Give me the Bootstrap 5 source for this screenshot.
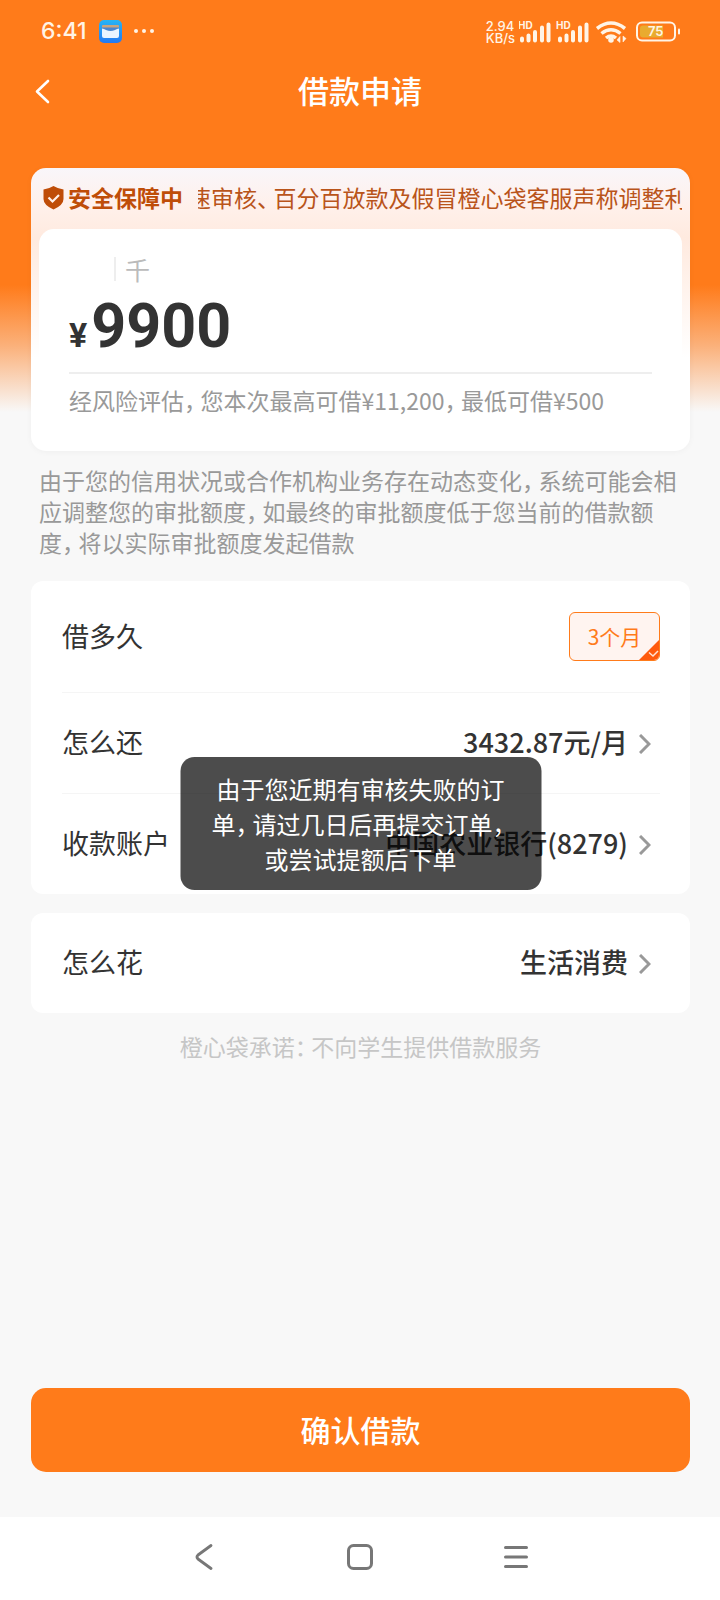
<!DOCTYPE html>
<html lang="zh-CN">
<head>
<meta charset="utf-8">
<meta name="viewport" content="width=device-width, initial-scale=1">
<title>借款申请</title>
<link rel="stylesheet" href="https://cdn.jsdelivr.net/npm/bootstrap@5.3.0/dist/css/bootstrap.min.css">
<style>
  :root { --brand: #ff7b1a; --page: #f8f8f8; --ink: #333; --muted: #999; }
  body { font-family: "Noto Sans CJK SC", sans-serif; color: var(--ink); font-size: 23px; line-height: 31px;
    background: linear-gradient(var(--brand) 0, var(--brand) 285px, #fbb079 345px, var(--page) 412px) no-repeat var(--page); }
  svg { display: block; flex: none; }
  button { color: inherit; }
  .status-bar { height: 62px; padding: 1px 39px 0 41px; color: #fff4e6; font-family: Inter, sans-serif; }
  .clock { font-size: 23px; font-weight: 500; }
  .net-speed { font-size: 13px; line-height: 12px; font-weight: 500; }
  .title-bar { height: 60px; margin-bottom: 46px; }
  .title-bar h1 { font-size: 31px; font-weight: 500; line-height: 40px; padding-bottom: 4px; }
  .back-btn { left: 31px; padding: 0; border: 0; }
  .page-col { padding: 0 30px 0 31px; }
  .amount-card { border-radius: 15px; padding: 0 8px;
    background: linear-gradient(#f9f6fa 0, #fff0ea 40px, #ffeadf 70px, #fff 190px);
    box-shadow: 0 1px 6px rgba(0, 0, 0, .04); }
  .safety { height: 61px; color: #b9541a; padding: 0 0 2px 4px; gap: 15px; }
  .safety strong { color: #bf4d08; gap: 4px; font-weight: 700; }
  .ticker { text-indent: -10px; }
  .pause { font-feature-settings: "halt"; margin-right: 5px; }
  .amount-inner { border-radius: 15px; background: #fff; padding: 24px 30px 35px; }
  .unit { color: #bbb; font-size: 25px; line-height: 32px; gap: 9px; padding-left: 45px; }
  .unit::before { content: ""; width: 2px; height: 24px; background: #eee; }
  .amount { font-family: Roboto, sans-serif; font-weight: 700; font-size: 61px; line-height: 72px; height: 77px; padding-top: 5px; }
  .amount small { font-size: 34px; margin-right: 4px; }
  .limit { color: var(--muted); border-top: 2px solid #eee; margin-top: 10px; padding-top: 11px; }
  .notice { color: var(--muted); padding: 14px 8px 23px; }
  .panel { background: #fff; border-radius: 12px; padding: 0 30px 0 31px; }
  .panel-row { min-height: 100px; font-size: 27px; width: 100%; background: none; border: 0; padding: 0; }
  .panel-row > span { padding-bottom: 3px; }
  .panel-row + .panel-row { border-top: 1px solid #f5f5f5; min-height: 101px; }
  .term-row { min-height: 111px; }
  .row-value { font-weight: 500; gap: 11px; padding-right: 9px; }
  .row-value svg { margin-top: 4px; }
  .term { width: 91px; height: 49px; border: 1px solid var(--brand); border-radius: 6px; background: #fff4f0;
    color: var(--brand); font-size: 21px; line-height: 47px; text-align: center; overflow: hidden; }
  .term svg { right: -1px; bottom: -1px; }
  .tip { width: 361px; padding: 14px 20px; border-radius: 14px; background: rgba(0, 0, 0, .7); color: #fff;
    font-size: 24px; line-height: 35px; bottom: 4px; z-index: 5; }
  .spend-panel { margin-top: 19px; }
  .promise { color: #c6c6c6; padding-top: 18px; }
  .confirm-btn { height: 84px; border-radius: 15px; background: var(--brand); color: #fff; font-size: 30px; font-weight: 500; margin-bottom: 45px; padding: 0 0 2px; }
  .confirm-btn:hover { background: #f06d0d; color: #fff; }
  .sys-nav { background: #fff; height: 83px; padding-bottom: 4px; }
  .sys-nav div { width: 65%; }
  .sys-nav button { border: 0; background: none; padding: 8px; }
</style>
</head>
<body class="d-flex flex-column min-vh-100">
<header>
  <div class="status-bar d-flex justify-content-between align-items-center">
    <div class="d-flex align-items-center">
      <span class="clock">6:41</span>
      <svg class="ms-2" width="60" height="24" viewBox="0 0 60 24" aria-hidden="true">
        <defs><linearGradient id="app" x1="0" y1="0" x2="0" y2="1"><stop offset="0" stop-color="#27b4f5"/><stop offset="1" stop-color="#2479f2"/></linearGradient></defs>
        <rect x="4" y="0" width="23" height="23" rx="5" fill="url(#app)"/>
        <rect x="7" y="5" width="17" height="5" rx="1" fill="#c9a57e"/>
        <path d="M7 8h17v8a2 2 0 0 1-2 2H9a2 2 0 0 1-2-2z" fill="#eaf4ff"/>
        <path d="M7 7.500h17v1q-2 0-4 1.500-4.500 2-9 0-2-1.500-4-1.500z" fill="#4a86d0"/>
        <g fill="#fff4e6"><circle cx="41" cy="11" r="2"/><circle cx="49" cy="11" r="2"/><circle cx="57" cy="11" r="2"/></g>
      </svg>
    </div>
    <div class="d-flex align-items-center">
      <div class="net-speed me-1">2.94<br>KB/s</div>
      <svg width="162" height="24" viewBox="0 0 162 24" fill="#fff4e6">
        <defs>
          <g id="bars"><path d="M4 20.500v-2M10.500 20.500v-5M17 20.500V12M24 20.500V7.500M30.500 20.500V4.500" stroke="#fff4e6" stroke-width="4" stroke-linecap="round"/></g>
        </defs>
        <use href="#bars" x="-1"/><use href="#bars" x="37"/>
        <text x="-1" y="9" font-size="10" font-weight="700">HD</text>
        <text x="37" y="9" font-size="10" font-weight="700">HD</text>
        <g fill="none" stroke="#fff4e6" stroke-width="3.500"><path d="M78 8.500q14-11 28 0M82.500 13.500q9.500-7.500 19 0M87 18q5-4 10 0"/></g>
        <circle cx="92" cy="20" r="2.800"/>
        <path d="M101 16.500v6l-3-2.500zM104 22v-6l3 2.500z" stroke="#fff4e6" stroke-width=".6"/>
        <rect x="118" y="2.500" width="38" height="18" rx="5" fill="none" stroke="#fff4e6" stroke-width="2"/>
        <path d="M124 5.500h20v12h-20q-3 0-3-3v-6q0-3 3-3z" fill="#e9ab2f"/>
        <path d="M160 9.500v4" stroke="#fff4e6" stroke-width="2" stroke-linecap="round"/>
        <text x="129" y="16" font-size="13" font-weight="600">75</text>
      </svg>
    </div>
  </div>
  <div class="title-bar position-relative d-flex align-items-center justify-content-center">
    <button class="btn back-btn position-absolute" type="button" aria-label="返回">
      <svg width="24" height="28" viewBox="0 0 24 28" fill="none" stroke="#fff" stroke-width="2.600" stroke-linecap="round" stroke-linejoin="round"><path d="M17 3 6 13.500 17 24"/></svg>
    </button>
    <h1 class="m-0 text-white">借款申请</h1>
  </div>
</header>

<main class="page-col flex-grow-1 d-flex flex-column">
  <section class="amount-card">
    <div class="safety d-flex align-items-center">
      <strong class="d-flex align-items-center flex-shrink-0">
        <svg width="21" height="24" viewBox="0 0 21 24"><path d="M10.500 0q5 3 10 3.500V13q0 6-10 10.500Q.5 19 .5 13V3.500Q5.500 3 10.500 0z" fill="#bf4d08"/><path d="m5.500 11.500 4 4 6.500-6.500" fill="none" stroke="#fff1ea" stroke-width="2.200"/></svg>
        <span>安全保障中</span>
      </strong>
      <div class="ticker overflow-hidden text-nowrap flex-grow-1">速审核<span class="pause">、</span>百分百放款及假冒橙心袋客服声称调整利</div>
    </div>
    <div class="amount-inner">
      <div class="unit d-flex align-items-center">千</div>
      <div class="amount"><small>¥</small>9900</div>
      <div class="limit">经风险评估<span class="pause">，</span>您本次最高可借¥11,200<span class="pause">，</span>最低可借¥500</div>
    </div>
  </section>

  <p class="notice m-0">由于您的信用状况或合作机构业务存在动态变化<span class="pause">，</span>系统可能会相应调整您的审批额度<span class="pause">，</span>如最终的审批额度低于您当前的借款额度<span class="pause">，</span>将以实际审批额度发起借款</p>

  <section class="panel position-relative">
    <div class="panel-row term-row d-flex align-items-center justify-content-between">
      <span>借多久</span>
      <div>
        <input class="btn-check" type="radio" name="term" id="term3" checked>
        <label class="term position-relative d-block" for="term3">3个月
          <svg class="position-absolute" width="22" height="22" viewBox="0 0 22 22"><path d="M22 0v22H0z" fill="#ff5a0d"/><path d="m11 13.500 4 3.500 5-5" fill="none" stroke="#ffe3d5" stroke-width="1.500"/></svg>
        </label>
      </div>
    </div>
    <button type="button" class="panel-row d-flex align-items-center justify-content-between">
      <span>怎么还</span>
      <span class="row-value d-flex align-items-center">3432.87元/月
        <svg width="12" height="20" viewBox="0 0 12 20" fill="none" stroke="#999" stroke-width="3"><path d="m1 1 9 9-9 9"/></svg></span>
    </button>
    <button type="button" class="panel-row d-flex align-items-center justify-content-between">
      <span>收款账户</span>
      <span class="row-value d-flex align-items-center">中国农业银行(8279)
        <svg width="12" height="20" viewBox="0 0 12 20" fill="none" stroke="#999" stroke-width="3"><path d="m1 1 9 9-9 9"/></svg></span>
    </button>
    <div class="tip position-absolute start-50 translate-middle-x text-center" role="alert">由于您近期有审核失败的订<br>单<span class="pause">，</span>请过几日后再提交订单<span class="pause">，</span><br>或尝试提额后下单</div>
  </section>

  <section class="panel spend-panel">
    <button type="button" class="panel-row d-flex align-items-center justify-content-between">
      <span>怎么花</span>
      <span class="row-value d-flex align-items-center">生活消费
        <svg width="12" height="20" viewBox="0 0 12 20" fill="none" stroke="#999" stroke-width="3"><path d="m1 1 9 9-9 9"/></svg></span>
    </button>
  </section>

  <p class="promise m-0 text-center">橙心袋承诺<span class="pause">：</span>不向学生提供借款服务</p>

  <button type="button" class="btn confirm-btn w-100 mt-auto">确认借款</button>
</main>

<nav class="sys-nav d-flex align-items-center justify-content-center" aria-label="系统导航">
  <div class="d-flex justify-content-around">
    <button type="button" aria-label="返回"><svg width="26" height="26" viewBox="0 0 26 26" fill="none" stroke="#777" stroke-width="2.800" stroke-linecap="round" stroke-linejoin="round"><path d="M20 1.500 7 11q-2 2 0 4l13 9.500"/></svg></button>
    <button type="button" aria-label="主页"><svg width="26" height="26" viewBox="0 0 26 26" fill="none" stroke="#777" stroke-width="3"><rect x="1.500" y="1.500" width="23" height="23" rx="5"/></svg></button>
    <button type="button" aria-label="最近任务"><svg width="26" height="26" viewBox="0 0 26 26" fill="none" stroke="#777" stroke-width="3" stroke-linecap="round"><path d="M2.500 3.500h21M2.500 13h21M2.500 22.500h21"/></svg></button>
  </div>
</nav>
<script src="https://cdn.jsdelivr.net/npm/bootstrap@5.3.0/dist/js/bootstrap.bundle.min.js"></script>
</body>
</html>
